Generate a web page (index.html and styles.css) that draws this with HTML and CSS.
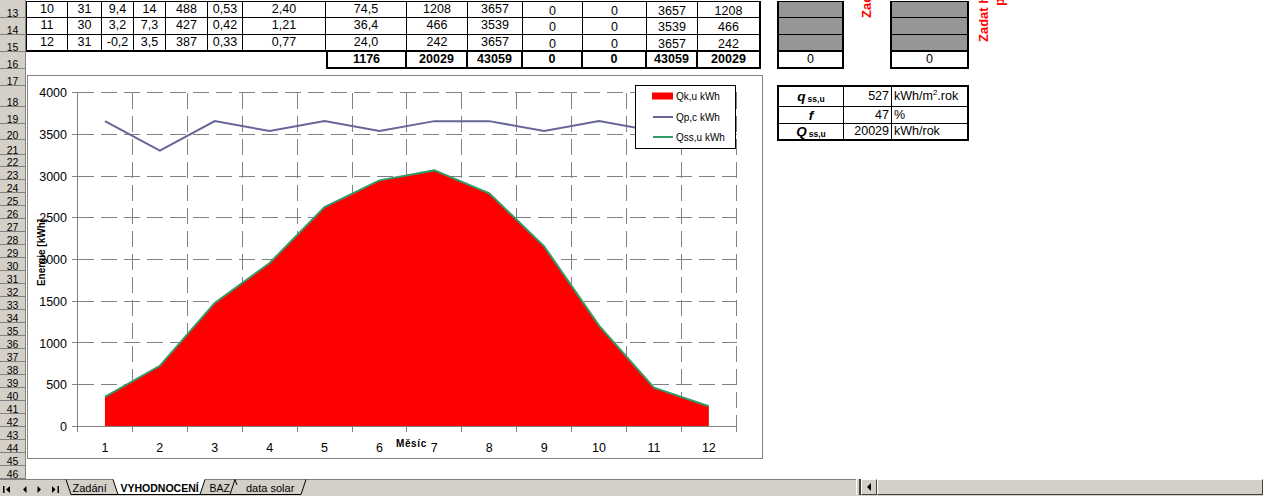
FILE: index.html
```html
<!DOCTYPE html>
<html lang="cs">
<head>
<meta charset="utf-8">
<title>VYHODNOCENÍ</title>
<link rel="stylesheet" href="styles.css">
</head>
<body>
<div class="screen">
  <div class="sheet">
    <div class="rowheads">
      <div class="rh h1"></div>
      <div class="rh h17">13</div><div class="rh h17">14</div><div class="rh h17">15</div><div class="rh h17">16</div>
      <div class="rh h17">17</div><div class="rh h21">18</div><div class="rh h17">19</div><div class="rh h16">20</div>
      <div class="rh h15">21</div><div class="rh h12">22</div>
      <div class="rh h13">23</div><div class="rh h13">24</div><div class="rh h13">25</div><div class="rh h13">26</div>
      <div class="rh h13">27</div><div class="rh h13">28</div><div class="rh h13">29</div><div class="rh h13">30</div>
      <div class="rh h13">31</div><div class="rh h13">32</div><div class="rh h13">33</div><div class="rh h13">34</div>
      <div class="rh h13">35</div><div class="rh h13">36</div><div class="rh h13">37</div><div class="rh h13">38</div>
      <div class="rh h13">39</div><div class="rh h13">40</div><div class="rh h13">41</div><div class="rh h13">42</div>
      <div class="rh h13">43</div><div class="rh h13">44</div><div class="rh h13">45</div><div class="rh h13">46</div>
    </div>
    <div class="cells">
      <div class="top">
        <div class="data">
          <div class="c r13 first">10</div><div class="c r13">31</div><div class="c r13">9,4</div><div class="c r13">14</div><div class="c r13">488</div><div class="c r13">0,53</div><div class="c r13">2,40</div><div class="c r13">74,5</div><div class="c r13">1208</div><div class="c r13">3657</div><div class="c r13 lo">0</div><div class="c r13 lo">0</div><div class="c r13 lo">3657</div><div class="c r13 lo last">1208</div>
          <div class="c first">11</div><div class="c">30</div><div class="c">3,2</div><div class="c">7,3</div><div class="c">427</div><div class="c">0,42</div><div class="c">1,21</div><div class="c">36,4</div><div class="c">466</div><div class="c">3539</div><div class="c lo">0</div><div class="c lo">0</div><div class="c lo">3539</div><div class="c lo last">466</div>
          <div class="c r15 first">12</div><div class="c r15">31</div><div class="c r15">-0,2</div><div class="c r15">3,5</div><div class="c r15">387</div><div class="c r15">0,33</div><div class="c r15">0,77</div><div class="c r15">24,0</div><div class="c r15">242</div><div class="c r15">3657</div><div class="c r15 lo">0</div><div class="c r15 lo">0</div><div class="c r15 lo">3657</div><div class="c r15 lo last">242</div>
          <div class="blank"></div><div class="blank"></div><div class="blank"></div><div class="blank"></div><div class="blank"></div><div class="blank"></div><div class="blank"></div>
          <div class="tot start">1176</div><div class="tot">20029</div><div class="tot">43059</div><div class="tot">0</div><div class="tot">0</div><div class="tot">43059</div><div class="tot">20029</div>
        </div>
        <div class="gcol g1">
          <div class="gc gfirst"></div><div class="gc"></div><div class="gc glast"></div><div class="gt">0</div>
        </div>
        <div class="gcol g2">
          <div class="gc gfirst"></div><div class="gc"></div><div class="gc glast"></div><div class="gt">0</div>
        </div>
        <span class="vt vt1">Zadat hodnoty</span>
        <span class="vt vt2">Zadat hodnoty</span>
        <span class="vt vt3">pro</span>
      </div>
      <div class="lower">
        <div class="chart">
          <svg class="plot" width="734" height="382" viewBox="28 76 734 382">
            <g class="grid" shape-rendering="crispEdges">
              <line x1="77.5" y1="384.5" x2="736.5" y2="384.5"/>
              <line x1="77.5" y1="342.5" x2="736.5" y2="342.5"/>
              <line x1="77.5" y1="301.5" x2="736.5" y2="301.5"/>
              <line x1="77.5" y1="259.5" x2="736.5" y2="259.5"/>
              <line x1="77.5" y1="217.5" x2="736.5" y2="217.5"/>
              <line x1="77.5" y1="176.5" x2="736.5" y2="176.5"/>
              <line x1="77.5" y1="134.5" x2="736.5" y2="134.5"/>
              <line x1="77.5" y1="92.5" x2="736.5" y2="92.5"/>
              <line x1="132.5" y1="92.5" x2="132.5" y2="426.5"/>
              <line x1="187.5" y1="92.5" x2="187.5" y2="426.5"/>
              <line x1="242.5" y1="92.5" x2="242.5" y2="426.5"/>
              <line x1="297.5" y1="92.5" x2="297.5" y2="426.5"/>
              <line x1="352.5" y1="92.5" x2="352.5" y2="426.5"/>
              <line x1="406.5" y1="92.5" x2="406.5" y2="426.5"/>
              <line x1="461.5" y1="92.5" x2="461.5" y2="426.5"/>
              <line x1="516.5" y1="92.5" x2="516.5" y2="426.5"/>
              <line x1="571.5" y1="92.5" x2="571.5" y2="426.5"/>
              <line x1="626.5" y1="92.5" x2="626.5" y2="426.5"/>
              <line x1="681.5" y1="92.5" x2="681.5" y2="426.5"/>
              <line x1="736.5" y1="92.5" x2="736.5" y2="426.5"/>
            </g>
            <polygon class="area" points="104.95,426.5 104.95,396.86 159.85,365.8 214.75,302.92 269.65,263.01 324.55,207.15 379.45,180.34 434.35,170.41 489.25,193.28 544.15,246.31 599.05,325.63 653.95,387.59 708.85,406.29 708.85,426.5"/>
            <polyline class="green" points="104.95,396.86 159.85,365.8 214.75,302.92 269.65,263.01 324.55,207.15 379.45,180.34 434.35,170.41 489.25,193.28 544.15,246.31 599.05,325.63 653.95,387.59 708.85,406.29"/>
            <polyline class="purple" points="104.95,121.14 159.85,150.7 214.75,121.14 269.65,130.99 324.55,121.14 379.45,130.99 434.35,121.14 489.25,121.14 544.15,130.99 599.05,121.14 653.95,130.99 708.85,121.14"/>
            <g class="axis" shape-rendering="crispEdges">
              <line x1="77.5" y1="92.5" x2="77.5" y2="426.5"/>
              <line x1="72" y1="426.5" x2="736.5" y2="426.5"/>
              <line x1="72" y1="384.5" x2="77.5" y2="384.5"/>
              <line x1="72" y1="342.5" x2="77.5" y2="342.5"/>
              <line x1="72" y1="301.5" x2="77.5" y2="301.5"/>
              <line x1="72" y1="259.5" x2="77.5" y2="259.5"/>
              <line x1="72" y1="217.5" x2="77.5" y2="217.5"/>
              <line x1="72" y1="176.5" x2="77.5" y2="176.5"/>
              <line x1="72" y1="134.5" x2="77.5" y2="134.5"/>
              <line x1="72" y1="92.5" x2="77.5" y2="92.5"/>
              <line x1="77.5" y1="426.5" x2="77.5" y2="432"/>
              <line x1="132.5" y1="426.5" x2="132.5" y2="432"/>
              <line x1="187.5" y1="426.5" x2="187.5" y2="432"/>
              <line x1="242.5" y1="426.5" x2="242.5" y2="432"/>
              <line x1="297.5" y1="426.5" x2="297.5" y2="432"/>
              <line x1="352.5" y1="426.5" x2="352.5" y2="432"/>
              <line x1="406.5" y1="426.5" x2="406.5" y2="432"/>
              <line x1="461.5" y1="426.5" x2="461.5" y2="432"/>
              <line x1="516.5" y1="426.5" x2="516.5" y2="432"/>
              <line x1="571.5" y1="426.5" x2="571.5" y2="432"/>
              <line x1="626.5" y1="426.5" x2="626.5" y2="432"/>
              <line x1="681.5" y1="426.5" x2="681.5" y2="432"/>
              <line x1="736.5" y1="426.5" x2="736.5" y2="432"/>
            </g>
            <g class="ylab">
              <text x="67" y="431">0</text>
              <text x="67" y="389.3">500</text>
              <text x="67" y="347.5">1000</text>
              <text x="67" y="305.8">1500</text>
              <text x="67" y="264">2000</text>
              <text x="67" y="222.3">2500</text>
              <text x="67" y="180.5">3000</text>
              <text x="67" y="138.8">3500</text>
              <text x="67" y="97">4000</text>
            </g>
            <g class="xlab">
              <text x="104.95" y="451.5">1</text>
              <text x="159.85" y="451.5">2</text>
              <text x="214.75" y="451.5">3</text>
              <text x="269.65" y="451.5">4</text>
              <text x="324.55" y="451.5">5</text>
              <text x="379.45" y="451.5">6</text>
              <text x="434.35" y="451.5">7</text>
              <text x="489.25" y="451.5">8</text>
              <text x="544.15" y="451.5">9</text>
              <text x="599.05" y="451.5">10</text>
              <text x="653.95" y="451.5">11</text>
              <text x="708.85" y="451.5">12</text>
            </g>
            <text class="xtitle" x="396" y="446.5">Měsíc</text>
            <text class="ytitle" x="44.7" y="252.5" transform="rotate(-90 44.7 252.5)">Energie [kWh]</text>
            <g class="legend">
              <rect class="lbox" x="635.5" y="85.5" width="100" height="63" shape-rendering="crispEdges"/>
              <rect x="652" y="92.5" width="21" height="7" fill="#ff0000"/>
              <line x1="653" y1="117" x2="673" y2="117" stroke="#666699" stroke-width="2"/>
              <line x1="653" y1="137" x2="673" y2="137" stroke="#339966" stroke-width="2"/>
              <text x="676" y="100">Qk,u kWh</text>
              <text x="676" y="121">Qp,c kWh</text>
              <text x="676" y="141">Qss,u kWh</text>
            </g>
          </svg>
        </div>
        <div class="info">
          <div class="ic lab"><i>q</i><span class="sub">ss,u</span></div>
          <div class="ic num">527</div>
          <div class="ic unit nr">kWh/m<span class="sup">2</span>.rok</div>
          <div class="ic lab"><i>f</i></div>
          <div class="ic num">47</div>
          <div class="ic unit nr">%</div>
          <div class="ic lab nb"><i>Q</i><span class="sub">ss,u</span></div>
          <div class="ic num nb">20029</div>
          <div class="ic unit nr nb">kWh/rok</div>
        </div>
      </div>
    </div>
  </div>
  <div class="bar">
    <svg class="tabs" width="856" height="17" viewBox="0 479 856 17">
      <line x1="0" y1="479.5" x2="856" y2="479.5" stroke="#808080" shape-rendering="crispEdges"/>
      <g fill="#000">
        <rect x="3" y="486" width="1.5" height="7"/>
        <polygon points="10,486 10,493 6,489.5"/>
        <polygon points="26.5,486 26.5,493 23,489.5"/>
        <polygon points="37.5,486 37.5,493 41,489.5"/>
        <polygon points="52,486 52,493 55.5,489.5"/>
        <rect x="57.5" y="486" width="1.5" height="7"/>
      </g>
      <g fill="none" stroke="#000">
        <path d="M66 479.5 L71 494.5 L118 494.5"/>
        <path d="M200 494.5 L230 494.5 L235 479.5"/>
        <path d="M230 494.5 L301 494.5 L306 479.5"/>
        <path d="M235 479.5 L237 485"/>
      </g>
      <polygon points="113,479 205,479 200,494.5 118,494.5" fill="#fff"/>
      <path d="M113 479.5 L118 494.5 L200 494.5 L205 479.5" fill="none" stroke="#000"/>
      <g class="tabtext">
        <text x="72.5" y="492">Zadání</text>
        <text class="act" x="120.5" y="492">VYHODNOCENÍ</text>
        <text class="baz" x="209.5" y="492">BAZ</text>
        <text x="246" y="492">data solar</text>
      </g>
    </svg>
    <div class="split"></div>
    <div class="sbtn">
      <svg width="5" height="8" viewBox="0 0 5 8"><polygon points="4,0 4,8 0,4" fill="#000"/></svg>
    </div>
    <div class="thumb"></div>
  </div>
</div>
</body>
</html>
```

FILE: styles.css
```css
* { box-sizing: border-box; }
html, body { margin: 0; padding: 0; background: #fff; }
body { font-family: "Liberation Sans", Arial, sans-serif; color: #000; }

.screen { width: 1263px; height: 496px; overflow: hidden; display: flex; flex-direction: column; background: #fff; }
.sheet { height: 479px; flex: none; display: flex; overflow: hidden; }

/* row headers */
.rowheads { width: 26px; flex: none; display: flex; flex-direction: column; background: #d4d0c8; border-right: 1px solid #808080; }
.rh { flex: none; border-bottom: 1px solid #808080; display: flex; align-items: flex-end; justify-content: center; font-size: 10.5px; line-height: 8px; }
.h1 { height: 1px; border-bottom: 0; }
.h12 { height: 12px; }
.h13 { height: 13px; }
.h15 { height: 15px; }
.h16 { height: 16px; }
.h17 { height: 17px; }
.h21 { height: 21px; }

.cells { flex: 1; display: flex; flex-direction: column; }

/* top tables */
.top { height: 69px; flex: none; display: flex; padding-top: 1px; position: relative; }
.data { display: grid; grid-template-columns: 42px 34px 32px 32px 42px 35px 83px 81px 61px 55px 60px 64px 51px 63px; grid-template-rows: 17px 17px 17px 17px; font-size: 12.5px; }
.c { border-right: 1px solid #000; border-bottom: 1px solid #000; text-align: center; line-height: 15px; white-space: nowrap; }
.r13 { border-top: 1px solid #000; }
.first { border-left: 1px solid #000; }
.last { border-right: 2px solid #000; }
.r15 { border-bottom: 2px solid #000; }
.lo { padding-top: 2px; }
.tot { border-right: 2px solid #000; border-bottom: 2px solid #000; text-align: center; font-weight: bold; line-height: 15px; }
.tot.start { border-left: 2px solid #000; }

.gcol { flex: none; display: flex; flex-direction: column; }
.g1 { width: 67px; margin-left: 16px; }
.g2 { width: 79px; margin-left: 46px; }
.gc { height: 17px; background: #969696; border-left: 2px solid #000; border-right: 2px solid #000; border-bottom: 1px solid #000; }
.gc.gfirst { border-top: 1px solid #000; }
.gc.glast { border-bottom: 2px solid #000; }
.gt { height: 17px; border: 2px solid #000; border-top: 0; text-align: center; font-size: 12.5px; line-height: 15px; }

.vt { position: absolute; color: #ff0000; font-weight: bold; font-size: 13px; line-height: 13px; white-space: nowrap; transform-origin: 0 0; transform: rotate(-90deg); }
.vt1 { left: 834px; top: 18px; }
.vt2 { left: 951px; top: 42px; }
.vt3 { left: 967px; top: 6px; }

/* lower: chart + info */
.lower { flex: 1; display: flex; align-items: flex-start; }
.chart { flex: none; width: 736px; height: 384px; margin: 6px 0 0 1px; border: 1px solid #808080; background: #fff; }
.plot { display: block; font-family: "Liberation Sans", Arial, sans-serif; }
.grid line { stroke: #808080; stroke-width: 1; stroke-dasharray: 16 7; }
.axis line { stroke: #808080; stroke-width: 1; }
.area { fill: #ff0000; }
.green { fill: none; stroke: #339966; stroke-width: 2; }
.purple { fill: none; stroke: #666699; stroke-width: 2; }
.ylab text { font-size: 12.5px; text-anchor: end; }
.xlab text { font-size: 12.5px; text-anchor: middle; }
.xtitle { font-size: 10px; font-weight: bold; letter-spacing: 0.6px; }
.ytitle { font-size: 10px; font-weight: bold; text-anchor: middle; }
.lbox { fill: #fff; stroke: #000; stroke-width: 1; }
.legend text { font-size: 10px; }

.info { flex: none; margin: 16px 0 0 14px; width: 192px; height: 56px; border: 2px solid #000; display: grid; grid-template-columns: 65px 48px 75px; grid-template-rows: 20px 17px 15px; font-size: 12.5px; }
.ic { border-right: 1px solid #000; border-bottom: 1px solid #000; white-space: nowrap; line-height: 15px; display: flex; align-items: center; }
.ic.nr { border-right: 0; }
.ic.nb { border-bottom: 0; }
.lab { justify-content: center; font-weight: bold; }
.lab i { font-size: 13.5px; }
.sub { font-size: 8.5px; margin-left: 2px; position: relative; top: 3px; }
.num { justify-content: flex-end; padding-right: 2px; }
.unit { padding-left: 2px; }
.sup { font-size: 8px; position: relative; top: -4px; }

/* bottom bar */
.bar { height: 17px; flex: none; display: flex; background: #d4d0c8; }
.tabs { display: block; flex: none; }
.tabtext text { font-family: "Liberation Sans", Arial, sans-serif; font-size: 11px; fill: #000; }
.tabtext .act { font-weight: bold; font-size: 10.5px; }
.tabtext .baz { font-size: 10.5px; }
.split { width: 5px; height: 16px; flex: none; border-left: 1px solid #fff; border-right: 2px solid #404040; }
.sbtn { width: 16px; height: 16px; flex: none; display: flex; align-items: center; justify-content: center; border: 1px solid; border-color: #fff #404040 #404040 #fff; }
.sbtn svg { display: block; }
.thumb { flex: 1; height: 16px; border: 1px solid; border-color: #fff #404040 #404040 #fff; }
```
